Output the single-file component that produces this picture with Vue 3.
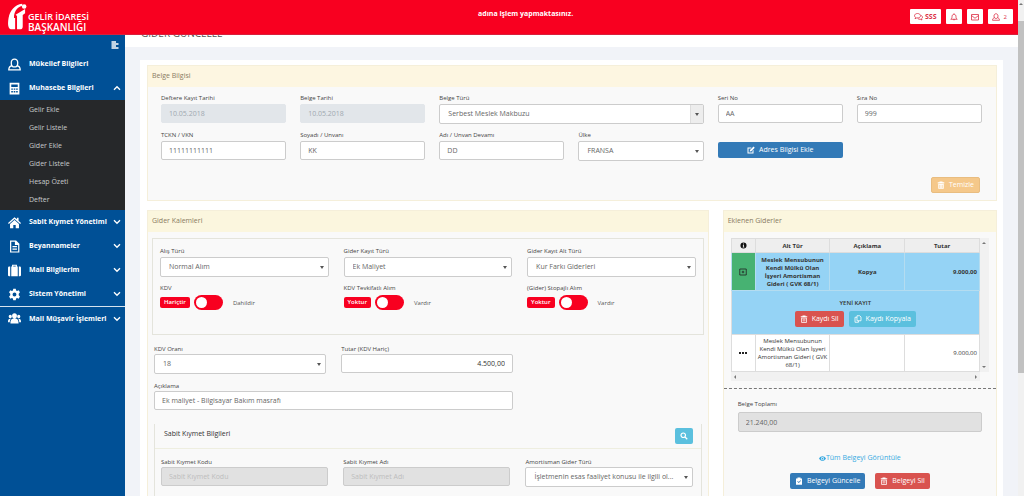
<script setup>
import { ref } from 'vue'

const submenu = ['Gelir Ekle', 'Gelir Listele', 'Gider Ekle', 'Gider Listele', 'Hesap Özeti', 'Defter']
const sections = [
  { label: 'Sabit Kıymet Yönetimi', icon: 'home' },
  { label: 'Beyannameler', icon: 'file' },
  { label: 'Mali Bilgilerim', icon: 'case' },
  { label: 'Sistem Yönetimi', icon: 'gear' },
  { label: 'Mali Müşavir İşlemleri', icon: 'users', divided: true },
]
const purchase = [
  { id: 'alis', label: 'Alış Türü', value: 'Normal Alım' },
  { id: 'kayit', label: 'Gider Kayıt Türü', value: 'Ek Maliyet' },
  { id: 'alt', label: 'Gider Kayıt Alt Türü', value: 'Kur Farkı Giderleri' },
]
const switches = ref([
  { id: 'kdv', label: 'KDV', off: 'Hariçtir', on: 'Dahildir', value: false },
  { id: 'tevkifat', label: 'KDV Tevkifatlı Alım', off: 'Yoktur', on: 'Vardır', value: false },
  { id: 'stopaj', label: '(Gider) Stopajlı Alım', off: 'Yoktur', on: 'Vardır', value: false },
])
</script>

<template>
  <div class="app">
    <div class="shell">
      <header class="topbar">
        <a class="brand" href="#" aria-label="Gelir İdaresi Başkanlığı">
          <svg class="logo" viewBox="0 0 20 28" aria-hidden="true">
            <path d="M15 0C7 1 2 7 .6 15-.6 22 0 27 4 27h3.500V15H6.300C6.300 9 9 4 15 2.200z" />
            <path d="M8 11.500 18 5.500v4.500l-2.500 2V24q0 3-3 3H9.500V13z" />
            <circle cx="17" cy="3" r="2.400" />
          </svg>
          <span class="brand-text"><span>GELİR İDARESİ</span><span class="second">BAŞKANLIĞI</span></span>
        </a>
        <p class="acting">adına işlem yapmaktasınız.</p>
        <nav class="tools" aria-label="Hesap">
          <button type="button" class="tool">
            <svg viewBox="0 0 18 16" class="line ic9"><path d="M7 1C3.500 1 1 3 1 5.500 1 7 2 8.200 3.200 9L2 11.500l3.500-1.700C10 10.500 13 8.500 13 5.500 13 3 10.500 1 7 1zM14 5c2 .5 3 2 3 3.500s-1 2.500-2 3l1 2.500-3.500-1.500c-2 .3-4-.3-5-1.500" /></svg>
            <b>SSS</b>
          </button>
          <button type="button" class="tool" aria-label="Bildirimler">
            <svg viewBox="0 0 16 16" class="line ic8"><path d="M8 1v1.500C5 2.500 4 5 4 7.500c0 3-1 4-2.500 5h13C13 11.500 12 10.500 12 7.500c0-2.500-1-5-4-5M6.500 12.500c0 2 3 2 3 0" /></svg>
          </button>
          <button type="button" class="tool" aria-label="Mesajlar">
            <svg viewBox="0 0 16 16" class="line ic8"><path d="M1 3h14v11H1zM1 5l7 5.500L15 5" /></svg>
          </button>
          <button type="button" class="tool" aria-label="Kullanıcı">
            <svg viewBox="0 0 16 16" class="line ic8"><path d="M8 1.500C5.500 1.500 4 3.500 4 6s1.500 5 4 5 4-2.500 4-5-1.500-4.500-4-4.500zM5 9.500c-2.500.5-4 2-4 5h14c0-3-1.500-4.500-4-5" /></svg>
            <span>2</span>
          </button>
        </nav>
      </header>

      <div class="below">
        <aside class="sidebar">
          <button type="button" class="collapse" aria-label="Menüyü daralt">
            <svg viewBox="0 0 16 16" class="line ic8"><path d="M1 2h9M1 6h14M1 10h9M1 14h14" stroke-width="2.800" /></svg>
          </button>
          <a class="item" href="#">
            <svg class="side-icon line" viewBox="0 0 16 16"><path d="M8 1.500C5.500 1.500 4 3.500 4 6s1.500 5 4 5 4-2.500 4-5-1.500-4.500-4-4.500zM5 9.500c-2.500.5-4 2-4 5h14c0-3-1.500-4.500-4-5" /></svg>
            <span>Mükellef Bilgileri</span>
          </a>
          <a class="item" href="#">
            <svg class="side-icon" viewBox="0 0 16 16"><path fill-rule="evenodd" d="M2 1h12v14.500H2zM4 3v3h8V3zM4 8v1.500h2V8zm3 0v1.500h2V8zm3 0v1.500h2V8zM4 11v2h2v-2zm3 0v2h2v-2zm3 0v2h2v-2z" /></svg>
            <span>Muhasebe Bilgileri</span>
            <svg class="chev" viewBox="0 0 12 8"><path d="M1.500 6.500 6 2l4.500 4.500" /></svg>
          </a>
          <div class="submenu">
            <a v-for="s in submenu" :key="s" href="#">{{ s }}</a>
          </div>
          <a v-for="s in sections" :key="s.label" class="item" :class="{ divided: s.divided }" href="#">
            <svg class="side-icon" viewBox="0 0 16 16">
              <path v-if="s.icon === 'home'" d="M8 1.500 0 8.500l1 1.200 7-6 7 6 1-1.200-3-2.700V2h-2v2zM8 5 2.500 9.700V15H6.500v-4h3v4h4V9.700z" />
              <path v-else-if="s.icon === 'file'" fill-rule="evenodd" d="M2.500.5h7.500l4 4v11H2.500zM4 2v12h8.500V6H8.500V2zM5.500 7.500h5.500V9H5.500zm0 3h5.500V12H5.500z" />
              <path v-else-if="s.icon === 'case'" fill-rule="evenodd" d="M5 3V1h6v2h1v12H4V3zm1.500 0h3v-.7h-3zM0 4.500Q0 3 1.500 3h1.200v12H1.500Q0 15 0 13.500zM13.300 3h1.200Q16 3 16 4.500v9q0 1.500-1.500 1.500h-1.200z" />
              <path v-else-if="s.icon === 'gear'" fill-rule="evenodd" d="M6.500 1h3l.5 2 1.200.6 1.900-.8 1.600 2.500L13.200 7v2l1.500 1.500-1.600 2.600-1.900-.7-1.200.6-.5 2h-3L6 13l-1.200-.6-1.900.7-1.600-2.600L2.800 9V7L1.300 5.300l1.600-2.500 1.900.8L6 3zM8 5.600a2.400 2.400 0 1 0 0 4.800 2.400 2.400 0 0 0 0-4.800z" />
              <path v-else d="M8 1.500a3 3.200 0 0 1 0 6.400 3 3.200 0 0 1 0-6.400zM2.800 3.500a2 2.100 0 0 1 0 4.200 2 2.100 0 0 1 0-4.200zM13.200 3.500a2 2.100 0 0 1 0 4.200 2 2.100 0 0 1 0-4.200zM3 14c0-4.500 1.500-6 5-6s5 1.500 5 6zM0 12.500c0-3.500 1-4.500 3.500-4.200C2.500 9.500 2.200 10.500 2.200 12.500zM16 12.500c0-3.500-1-4.500-3.500-4.200 1 1.200 1.300 2.200 1.300 4.200z" />
            </svg>
            <span>{{ s.label }}</span>
            <svg class="chev" viewBox="0 0 12 8"><path d="M1.500 1.500 6 6l4.500-4.500" /></svg>
          </a>
        </aside>

        <main class="main">
          <div class="titlebar"><h1>GİDER GÜNCELLE</h1></div>
          <div class="card">
            <section class="panel">
              <h2>Belge Bilgisi</h2>
              <div class="doc">
                <div class="grid6">
                  <div class="field"><label for="f1">Deftere Kayıt Tarihi</label><input id="f1" class="ctl date" value="10.05.2018" disabled /></div>
                  <div class="field"><label for="f2">Belge Tarihi</label><input id="f2" class="ctl date" value="10.05.2018" disabled /></div>
                  <div class="field wide"><label for="f3">Belge Türü</label>
                    <div class="sel boxed"><select id="f3" class="ctl"><option>Serbest Meslek Makbuzu</option></select></div></div>
                  <div class="field"><label for="f4">Seri No</label><input id="f4" class="ctl" value="AA" /></div>
                  <div class="field"><label for="f5">Sıra No</label><input id="f5" class="ctl" value="999" /></div>
                  <div class="field"><label for="f6">TCKN / VKN</label><input id="f6" class="ctl" value="11111111111" /></div>
                  <div class="field"><label for="f7">Soyadı / Unvanı</label><input id="f7" class="ctl" value="KK" /></div>
                  <div class="field"><label for="f8">Adı / Unvan Devamı</label><input id="f8" class="ctl" value="DD" /></div>
                  <div class="field"><label for="f9">Ülke</label>
                    <div class="sel"><select id="f9" class="ctl"><option>FRANSA</option></select></div></div>
                  <button type="button" class="btn primary address">
                    <svg viewBox="0 0 16 16" class="ic8"><path fill-rule="evenodd" d="M1 3h8L7.500 5H3v8h8V9.500l2-2V15H1zM13 1l2.500 2.500L8.500 10.500 5.500 11l.5-3z" /></svg>
                    Adres Bilgisi Ekle
                  </button>
                </div>
                <div class="actions">
                  <button type="button" class="btn warning" disabled>
                    <svg viewBox="0 0 16 16" class="ic8"><path fill-rule="evenodd" d="M5 1h6v1.500h3.500V5h-13V2.500H5zM2.500 6h11v9.500h-11zM5 7.500V14h1V7.500zm2.500 0V14h1V7.500zm2.500 0V14h1V7.500z" /></svg>
                    Temizle
                  </button>
                </div>
              </div>
            </section>

            <div class="columns">
              <section class="panel soft">
                <h2>Gider Kalemleri</h2>
                <div class="items">
                  <div class="purchase">
                    <div v-for="p in purchase" :key="p.id" class="field">
                      <label :for="p.id">{{ p.label }}</label>
                      <div class="sel"><select :id="p.id" class="ctl"><option>{{ p.value }}</option></select></div>
                    </div>
                    <div v-for="s in switches" :key="s.id" class="field">
                      <label :for="s.id">{{ s.label }}</label>
                      <div class="switch">
                        <span class="badge">{{ s.off }}</span>
                        <input :id="s.id" v-model="s.value" type="checkbox" role="switch" />
                        <span class="on">{{ s.on }}</span>
                      </div>
                    </div>
                  </div>
                  <div class="amounts">
                    <div class="field"><label for="oran">KDV Oranı</label>
                      <div class="sel"><select id="oran" class="ctl"><option>18</option></select></div></div>
                    <div class="field"><label for="tutar">Tutar (KDV Hariç)</label><input id="tutar" class="ctl num" value="4.500,00" /></div>
                    <div class="field note"><label for="aciklama">Açıklama</label><input id="aciklama" class="ctl" value="Ek maliyet - Bilgisayar Bakım masrafı" /></div>
                  </div>
                  <div class="asset">
                    <div class="asset-head">
                      <h3>Sabit Kıymet Bilgileri</h3>
                      <button type="button" class="btn info search" aria-label="Ara">
                        <svg viewBox="0 0 16 16" class="line ic8"><path stroke-width="2.400" d="M6.500 2a4.500 4.500 0 1 0 0 9 4.500 4.500 0 0 0 0-9zM10 10l4.500 4.500" /></svg>
                      </button>
                    </div>
                    <div class="asset-grid">
                      <div class="field"><label for="kod">Sabit Kıymet Kodu</label><input id="kod" class="ctl grey" placeholder="Sabit Kıymet Kodu" disabled /></div>
                      <div class="field"><label for="ad">Sabit Kıymet Adı</label><input id="ad" class="ctl grey" placeholder="Sabit Kıymet Adı" disabled /></div>
                      <div class="field"><label for="amort">Amortisman Gider Türü</label>
                        <div class="sel"><select id="amort" class="ctl"><option>İşletmenin esas faaliyet konusu ile ilgili ol...</option></select></div></div>
                    </div>
                  </div>
                </div>
              </section>

              <section class="panel soft">
                <h2>Eklenen Giderler</h2>
                <div class="added">
                  <div class="table-wrap">
                    <table>
                      <colgroup><col class="c1" /><col /><col /><col /></colgroup>
                      <thead>
                        <tr>
                          <th><svg viewBox="0 0 16 16" class="ic7" aria-label="Bilgi"><path fill-rule="evenodd" d="M8 1a7 7 0 1 0 0 14A7 7 0 0 0 8 1zM7 3.500h2v2H7zM6.500 7H9v4h1v1.500H6V11h1V8.500h-.5z" /></svg></th>
                          <th>Alt Tür</th><th>Açıklama</th><th>Tutar</th>
                        </tr>
                      </thead>
                      <tbody>
                        <tr class="current">
                          <td class="open"><button type="button" class="plain" aria-label="Detay"><svg viewBox="0 0 16 16" class="line ic8"><path d="M1.500 2h13v12h-13zM8 5.500v5M5.500 8h5" /></svg></button></td>
                          <td>Meslek Mensubunun Kendi Mülkü Olan İşyeri Amortisman Gideri ( GVK 68/1)</td>
                          <td>Kopya</td><td class="num">9.000,00</td>
                        </tr>
                        <tr class="detail">
                          <td colspan="4">
                            <div class="new">YENİ KAYIT</div>
                            <div class="pair">
                              <button type="button" class="btn danger">
                                <svg viewBox="0 0 16 16" class="ic8"><path fill-rule="evenodd" d="M5 1h6v1.500h3.500V4.500h-13v-2H5zM2.500 5.500h11v10h-11zM4 7v7h8V7zM5.500 8h1v5h-1zm2 0h1v5h-1zm2 0h1v5h-1z" /></svg>
                                Kaydı Sil
                              </button>
                              <button type="button" class="btn info">
                                <svg viewBox="0 0 16 16" class="line ic8"><path d="M6 1.500h5.500l2.500 2.500v7.500H6zM6 4.500H2v10h7v-3" /></svg>
                                Kaydı Kopyala
                              </button>
                            </div>
                          </td>
                        </tr>
                        <tr class="plainrow">
                          <td><button type="button" class="plain" aria-label="Seçenekler"><svg viewBox="0 0 16 16" class="ic8"><path d="M0 6h4v4H0zM6 6h4v4H6zM12 6h4v4h-4z" /></svg></button></td>
                          <td>Meslek Mensubunun Kendi Mülkü Olan İşyeri Amortisman Gideri ( GVK 68/1)</td>
                          <td></td><td class="num">9.000,00</td>
                        </tr>
                      </tbody>
                    </table>
                    <div class="vbar"><i class="tri up"></i><i class="tri down"></i></div>
                    <div class="hbar"><i class="tri left"></i><i class="tri right"></i></div>
                  </div>
                  <div class="total">
                    <div class="field"><label for="toplam">Belge Toplamı</label><input id="toplam" class="ctl sum" value="21.240,00" readonly /></div>
                    <a class="view" href="#">
                      <svg viewBox="0 0 16 16" class="ic7"><path fill-rule="evenodd" d="M0 8c4-7 12-7 16 0-4 7-12 7-16 0zM8 4.500a3.500 3.500 0 1 0 0 7 3.500 3.500 0 0 0 0-7zM8 6a2 2 0 1 1 0 4 2 2 0 0 1 0-4z" /></svg>Tüm Belgeyi Görüntüle
                    </a>
                    <div class="pair">
                      <button type="button" class="btn primary">
                        <svg viewBox="0 0 16 16" class="ic8"><path fill-rule="evenodd" d="M5 1h6v2h3v12.500H2V3h3zM4.500 9l3 3 4.500-4.500-1-1L7.500 10l-2-2z" /></svg>
                        Belgeyi Güncelle
                      </button>
                      <button type="button" class="btn danger">
                        <svg viewBox="0 0 16 16" class="ic8"><path fill-rule="evenodd" d="M5 1h6v1.500h3.500V4.500h-13v-2H5zM2.500 5.500h11v10h-11zM4 7v7h8V7zM5.500 8h1v5h-1zm2 0h1v5h-1zm2 0h1v5h-1z" /></svg>
                        Belgeyi Sil
                      </button>
                    </div>
                  </div>
                </div>
              </section>
            </div>
          </div>
        </main>
      </div>
    </div>
    <div class="page-scroll"><i class="tri up"></i><div class="thumb"></div></div>
  </div>
</template>

<style>
body { margin: 0; overflow: hidden; }
</style>

<style scoped>
* { box-sizing: border-box; }
.app { display: flex; height: 100vh; overflow: hidden; font-family: "Open Sans", "Noto Sans", sans-serif; font-size: 7px; line-height: 10px; color: #555; background: #f1f3f8; }
.shell { flex: 1; min-width: 0; display: flex; flex-direction: column; }
button, input, select { font: inherit; color: inherit; margin: 0; }
button { cursor: pointer; }
a { color: inherit; text-decoration: none; }
h1, h2, h3, p { margin: 0; font-weight: 400; }
svg { flex: none; fill: currentColor; }
svg.line { fill: none; stroke: currentColor; stroke-width: 1.6; }
.ic7 { width: 7px; height: 7px; }
.ic8 { width: 8px; height: 8px; }
.ic9 { width: 9px; height: 8px; }

.topbar { flex: none; display: grid; grid-template-columns: 478px 1fr auto; height: 35px; background: #f80020; color: #fff; border-bottom: 1px solid #d8203c; }
.brand { display: flex; align-items: flex-start; gap: 1px; padding: 3px 0 0 8px; }
.logo { width: 19px; height: 28px; }
.brand-text { display: grid; padding-top: 9px; font: 600 9px/10px "Open Sans", sans-serif; white-space: nowrap; }
.brand-text .second { font-size: 10px; }
.acting { padding-top: 9px; font-weight: 700; }
.tools { display: flex; align-items: flex-start; gap: 5px; padding: 9px 5px 0 0; }
.tool { display: flex; align-items: center; justify-content: center; gap: 2px; min-width: 16px; height: 15px; padding: 0 4px; border: 0; border-radius: 1px; background: #fff; color: #dc2f45; }
.tool span { font-size: 6px; padding: 0 2px; }

.below { flex: 1; display: flex; min-height: 0; }
.sidebar { flex: none; width: 125px; background: #005096; color: #fff; }
.collapse { display: flex; justify-content: flex-end; width: 100%; height: 17px; padding: 6px 6px 0 0; border: 0; background: none; }
.item { display: flex; align-items: center; height: 24px; padding: 0 4px 0 8px; font-weight: 700; }
.item span { flex: 1; margin-left: 8px; white-space: nowrap; }
.item.divided { border-top: 1px solid #d5e2ee; }
.side-icon { width: 13px; height: 13px; }
.chev { width: 8px; height: 6px; }
.chev path { fill: none; stroke: currentColor; stroke-width: 2; }
.submenu { display: grid; padding: 1px 0; background: #26282a; color: #c7cacc; }
.submenu a { height: 18px; padding-left: 29px; line-height: 18px; }

.main { flex: 1; min-width: 0; display: flex; flex-direction: column; }
.titlebar { flex: none; display: flex; align-items: flex-end; height: 12px; padding: 0 16px 6px; overflow: hidden; background: #fff; }
.titlebar h1 { flex: none; font-size: 10px; line-height: 16px; color: #555; }
.card { margin: 13px 15px 0; padding: 5px 6px 20px 7px; background: #fff; }
.panel { border: 1px solid #f5efda; background: #f9f9f9; }
.panel h2 { height: 21px; padding: 0 4px; background: #fdf6e1; font-size: 7px; line-height: 20px; color: #8a7b62; }
.panel.soft h2 { background: #fbf6de; }
.field { min-width: 0; }
.field label { display: block; height: 10px; font-size: 6px; line-height: 9px; white-space: nowrap; color: #444; }
.ctl { display: block; width: 100%; height: 19px; padding: 0 7px; border: 1px solid #ccc; border-radius: 2px; background: #fff; color: #666; outline: 0; }
.ctl.date { border-color: #e2e6ea; background: #e2e6ea; color: #a0a8b0; }
.ctl.num { text-align: right; color: #333; }
.ctl.grey { background: #e1e1e1; }
.ctl.grey::placeholder { color: #bdbdbd; opacity: 1; }
.ctl.sum { height: 20px; background: #e1e1e1; }
.sel { position: relative; }
.sel select { height: 20px; padding: 0 14px 0 8px; appearance: none; text-overflow: ellipsis; }
.sel::after { content: ""; position: absolute; right: 5px; top: 9px; border: 2px solid transparent; border-top: 3px solid #555; border-bottom: 0; pointer-events: none; }
.sel.boxed::before { content: ""; position: absolute; right: 1px; top: 1px; width: 12px; height: 18px; border-left: 1px solid #ddd; background: #ededed; pointer-events: none; }

.btn { display: flex; align-items: center; justify-content: center; gap: 4px; height: 16px; padding: 0 5px; border: 0; border-radius: 2px; color: #fff; white-space: nowrap; }
.primary { background: #337ab7; }
.danger { background: #d9534f; }
.info { background: #5bc0de; }
.warning { background: #f5c88a; border: 1px solid #e9bd80; }

.doc { padding: 7px 14px 7px 13px; }
.grid6 { display: grid; grid-template-columns: repeat(6, minmax(0, 1fr)); gap: 7px 14px; }
.wide { grid-column: span 2; }
.address { margin-top: 11px; }
.actions { display: flex; justify-content: flex-end; margin: 16px 2px 0 0; }

.columns { display: grid; grid-template-columns: minmax(0, 561fr) minmax(0, 274fr); gap: 14px; margin-top: 9px; }
.items { padding: 6px 4px; }
.purchase { display: grid; grid-template-columns: repeat(3, minmax(0, 1fr)); gap: 7px 15px; padding: 8px 7px 23px; border: 1px solid #e4e4dc; }
.switch { display: flex; align-items: center; height: 17px; }
.badge { padding: 0 4px; border-radius: 2px; background: #f80020; color: #fff; font-size: 6px; line-height: 11px; font-weight: 600; }
.switch input { appearance: none; width: 29px; height: 15px; margin: 0 10px 0 4px; border-radius: 8px; background: #f80020; }
.switch input::before { content: ""; display: block; width: 11px; height: 11px; margin: 2px; border-radius: 50%; background: #fff; }
.switch input:checked::before { margin-left: 16px; }
.on { font-size: 6px; }
.amounts { display: grid; grid-template-columns: repeat(3, minmax(0, 1fr)); gap: 7px 15px; padding: 9px 3px 0 2px; }
.amounts .field:nth-child(2) { grid-column: 2 / 4; width: calc(50% - 8px); }
.amounts label, .asset label { line-height: 10px; }
.note { grid-column: 1 / 3; }
.asset { margin: 14px 2px 0; border: 1px solid #e4e4dc; border-top: 0; }
.asset-head { display: flex; align-items: center; justify-content: space-between; height: 25px; padding: 0 8px 0 9px; border-bottom: 1px solid #eeeee0; }
.asset-head h3 { font-size: 7px; line-height: 10px; color: #333; padding-bottom: 5px; }
.search { width: 18px; padding: 0; }
.asset-grid { display: grid; grid-template-columns: repeat(3, minmax(0, 1fr)); gap: 15px; padding: 8px 8px 20px 6px; }

.added { padding-top: 6px; }
.table-wrap { display: grid; grid-template-columns: minmax(0, 1fr) 9px; margin: 0 7px; }
table { width: 100%; border-collapse: collapse; table-layout: fixed; font-size: 6px; line-height: 8px; text-align: center; color: #333; }
.c1 { width: 24px; }
th, td { padding: 0 2px; border: 1px solid #ddd; }
th { height: 14px; background: #eee; font-weight: 700; }
th svg { display: block; margin: auto; color: #111; }
.current td { height: 38px; background: #95d3f5; font-weight: 700; border-color: #b4dcf0; }
.current td.open { background: #47b272; }
.detail td { height: 44px; background: #95d3f5; }
.plainrow td { height: 37px; background: #fff; }
td.num { text-align: right; }
.plain { display: block; margin: auto; padding: 0; border: 0; background: none; color: #222; }
.plain svg { display: block; }
.new { font-weight: 600; margin-bottom: 4px; }
.pair { display: flex; justify-content: center; gap: 5px; font-size: 7px; }
.tri { display: block; border: 2px solid transparent; }
.up { border-top: 0; border-bottom-color: #777; }
.down { border-bottom: 0; border-top-color: #777; }
.left { border-left: 0; border-right-color: #777; }
.right { border-right: 0; border-left-color: #777; }
.vbar, .hbar { display: flex; justify-content: space-between; align-items: center; background: #f1f1f1; }
.vbar { flex-direction: column; padding: 4px 0; }
.hbar { height: 9px; padding: 0 3px; }
.total { margin-top: 7px; padding: 11px 14px 6px; border-top: 1px dashed #777; }
.total label { height: 12px; }
.view { display: flex; align-items: center; justify-content: center; margin: 21px 0 10px; color: #36a9e1; }
.total .pair { gap: 10px; }

.page-scroll { flex: none; width: 6px; padding-top: 3px; background: #f1f1f1; }
.page-scroll .tri { width: 4px; margin: 0 auto; }
.thumb { height: 71vh; margin-top: 16px; background: #c1c1c1; }
</style>
